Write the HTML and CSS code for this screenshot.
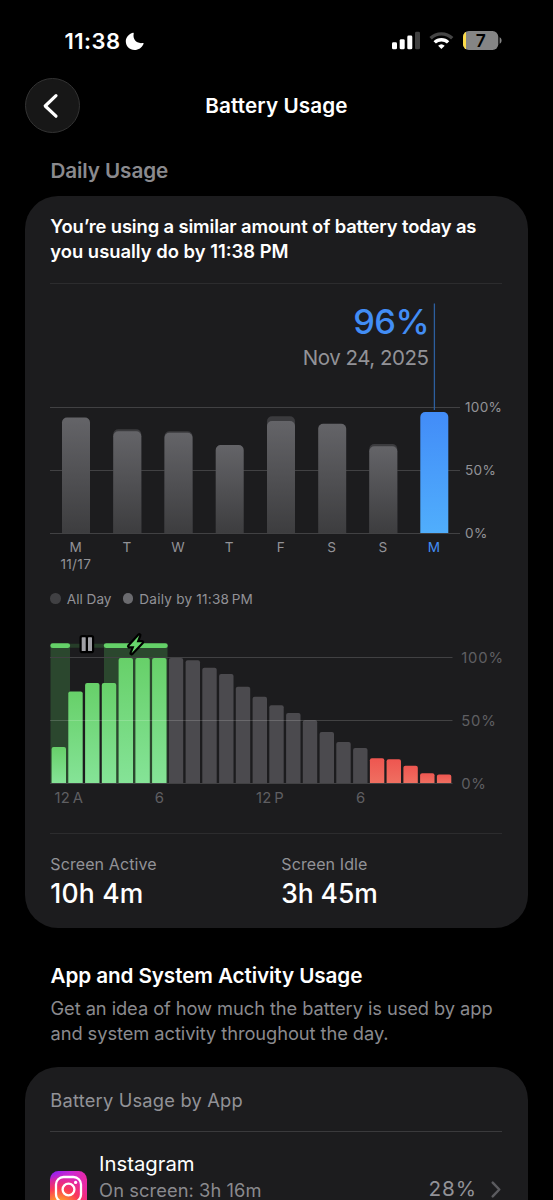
FILE: index.html
```html
<!DOCTYPE html>
<html lang="en">
<head>
<meta charset="utf-8">
<title>Battery Usage</title>
<link rel="stylesheet" href="styles.css">
</head>
<body>
<div class="screen">
  <header class="status">
    <div class="status-time">
      <span class="clock">11:38</span>
      <svg class="moon" width="20" height="20" viewBox="0 0 20 20"><path fill="#fff" d="M7.900.8c.5-.2 1 .2.8.8-1.200 5.700 2.900 10.500 9.100 9.400.6-.1 1 .4.700.9-1.600 3.800-5 6-8.900 6C4.500 17.900.8 14.200.8 9.200.8 5.400 3.800 2 7.900.8z"/></svg>
    </div>
    <svg class="status-icons" width="112" height="24" viewBox="391 29 112 24">
      <g fill="#fff">
        <rect x="392" y="42.300" width="5" height="7" rx="1.400"/>
        <rect x="399.700" y="39.200" width="5" height="10.100" rx="1.400"/>
        <rect x="407.300" y="35.600" width="5" height="13.700" rx="1.400"/>
        <rect x="415" y="31.800" width="5" height="17.500" rx="1.400" opacity=".25"/>
      </g>
      <g fill="none" stroke="#fff" stroke-width="3.400">
        <path opacity=".27" d="M430.600 38.300a15.500 15.500 0 0 1 21.600 0"/>
        <path d="M434.700 42.400a9.600 9.600 0 0 1 13.400 0"/>
      </g>
      <path fill="#fff" d="M441.400 49l-3.300-3.300a4.800 4.800 0 0 1 6.600 0z"/>
      <clipPath id="batt"><rect x="463" y="31" width="35.300" height="19" rx="5.800"/></clipPath>
      <g clip-path="url(#batt)">
        <rect x="463" y="31" width="36" height="19" fill="#858585"/>
        <rect x="463" y="31" width="3" height="19" fill="#fddc4a"/>
      </g>
      <path fill="#858585" d="M499.600 37.300c2.600.8 2.600 5.600 0 6.400z"/>
      <text class="battery-level" x="480.800" y="46.600">7</text>
    </svg>
  </header>

  <nav class="nav">
    <button class="back" aria-label="Back">
      <svg width="16" height="26" viewBox="0 0 16 26"><path fill="none" stroke="#fff" stroke-width="3.200" stroke-linecap="round" stroke-linejoin="round" d="M13 2.600 2.200 13 13 23.200"/></svg>
    </button>
    <h1 class="title">Battery Usage</h1>
  </nav>

  <h2 class="section-title">Daily Usage</h2>

  <section class="card daily">
    <p class="headline"><span class="headline-a">You’re using a similar amount of battery today as</span><br>you usually do by 11:38 PM</p>
    <hr class="rule">

    <svg class="week" width="460" height="292" viewBox="50 284 460 292">
      <defs>
        <linearGradient id="gray" x1="0" y1="0" x2="0" y2="1"><stop stop-color="#646468"/><stop offset="1" stop-color="#3d3d3f"/></linearGradient>
        <linearGradient id="blue" x1="0" y1="0" x2="0" y2="1"><stop stop-color="#428cf8"/><stop offset="1" stop-color="#50aefc"/></linearGradient>
      </defs>
      <text class="percent" x="429" y="334">96%</text>
      <text class="date" x="428.500" y="364.500">Nov 24, 2025</text>
      <path class="grid" d="M50 407.500H460M50 470.500H460M50 533.500H460"/>
      <path stroke="#2c5f9f" stroke-width="1.300" d="M434.400 303.500V410"/>
      <g fill="#3b3b3e">
        <path d="M113.300 533V434.300a5 5 0 0 1 5-5h18a5 5 0 0 1 5 5V533z"/>
        <path d="M164.500 533V436.300a5 5 0 0 1 5-5h18a5 5 0 0 1 5 5V533z"/>
        <path d="M267 533V421.300a5 5 0 0 1 5-5h18a5 5 0 0 1 5 5V533z"/>
        <path d="M369.300 533V449a5 5 0 0 1 5-5h18a5 5 0 0 1 5 5V533z"/>
      </g>
      <g fill="url(#gray)">
        <path d="M62 533V422.500a5 5 0 0 1 5-5h18a5 5 0 0 1 5 5V533z"/>
        <path d="M113.300 533V436.300a5 5 0 0 1 5-5h18a5 5 0 0 1 5 5V533z"/>
        <path d="M164.500 533V437.700a5 5 0 0 1 5-5h18a5 5 0 0 1 5 5V533z"/>
        <path d="M215.700 533V450a5 5 0 0 1 5-5h18a5 5 0 0 1 5 5V533z"/>
        <path d="M267 533V426a5 5 0 0 1 5-5h18a5 5 0 0 1 5 5V533z"/>
        <path d="M318.200 533V428.700a5 5 0 0 1 5-5h18a5 5 0 0 1 5 5V533z"/>
        <path d="M369.300 533V451.300a5 5 0 0 1 5-5h18a5 5 0 0 1 5 5V533z"/>
      </g>
      <path fill="url(#blue)" d="M420.300 533V417a5 5 0 0 1 5-5h18a5 5 0 0 1 5 5V533z"/>
      <g class="axis">
        <text x="465" y="412.300">100%</text>
        <text x="465" y="475.300">50%</text>
        <text x="465" y="538.300">0%</text>
      </g>
      <g class="axis day">
        <text x="75.800" y="552">M</text>
        <text x="75.800" y="569.300">11/17</text>
        <text x="127" y="552">T</text>
        <text x="178.200" y="552">W</text>
        <text x="229.300" y="552">T</text>
        <text x="280.800" y="552">F</text>
        <text x="331.800" y="552">S</text>
        <text x="383" y="552">S</text>
        <text class="today" x="434" y="552">M</text>
      </g>
    </svg>

    <div class="legend">
      <span class="dot dark"></span><span class="legend-all">All Day</span>
      <span class="dot light"></span><span class="legend-daily">Daily by 11:38<span class="thin"></span>PM</span>
    </div>

    <svg class="hours" width="460" height="186" viewBox="50 626 460 186">
      <defs>
        <linearGradient id="green" x1="0" y1="0" x2="0" y2="1"><stop stop-color="#67d069"/><stop offset="1" stop-color="#85e397"/></linearGradient>
        <linearGradient id="red" x1="0" y1="0" x2="0" y2="1"><stop stop-color="#ee5650"/><stop offset="1" stop-color="#ef6f61"/></linearGradient>
      </defs>
      <path fill="#2b472e" d="M50.500 646H70V783H50.500zM104 646h63.500V783H104z"/>
      <path fill="#263d29" d="M68 643.800h38v4H68z"/>
      <rect x="50.300" y="643.300" width="19.800" height="4.800" rx="2.400" fill="#64d168"/>
      <rect x="103.800" y="643.300" width="64" height="4.800" rx="2.400" fill="#64d168"/>
      <path class="grid" d="M50 657.500H452.500"/>
      <g fill="url(#green)">
        <path d="M51.600 783V749a2 2 0 0 1 2-2h10.400a2 2 0 0 1 2 2V783z"/>
        <path d="M68.300 783V693.500a2 2 0 0 1 2-2h10.400a2 2 0 0 1 2 2V783z"/>
        <path d="M85.100 783V685a2 2 0 0 1 2-2h10.400a2 2 0 0 1 2 2V783z"/>
        <path d="M101.800 783V685a2 2 0 0 1 2-2h10.400a2 2 0 0 1 2 2V783z"/>
        <path d="M118.600 783V660a2 2 0 0 1 2-2h10.400a2 2 0 0 1 2 2V783z"/>
        <path d="M135.400 783V660a2 2 0 0 1 2-2h10.400a2 2 0 0 1 2 2V783z"/>
        <path d="M152.100 783V660a2 2 0 0 1 2-2h10.400a2 2 0 0 1 2 2V783z"/>
      </g>
      <g fill="#4b4a4e">
        <path d="M168.800 783V660a2 2 0 0 1 2-2h10.400a2 2 0 0 1 2 2V783z"/>
        <path d="M185.600 783V662.300a2 2 0 0 1 2-2h10.400a2 2 0 0 1 2 2V783z"/>
        <path d="M202.300 783V669.700a2 2 0 0 1 2-2h10.400a2 2 0 0 1 2 2V783z"/>
        <path d="M219.100 783V676a2 2 0 0 1 2-2h10.400a2 2 0 0 1 2 2V783z"/>
        <path d="M235.800 783V688.700a2 2 0 0 1 2-2h10.400a2 2 0 0 1 2 2V783z"/>
        <path d="M252.600 783V698.700a2 2 0 0 1 2-2h10.400a2 2 0 0 1 2 2V783z"/>
        <path d="M269.300 783V707.300a2 2 0 0 1 2-2h10.400a2 2 0 0 1 2 2V783z"/>
        <path d="M286.100 783V715a2 2 0 0 1 2-2h10.400a2 2 0 0 1 2 2V783z"/>
        <path d="M302.800 783V722.300a2 2 0 0 1 2-2h10.400a2 2 0 0 1 2 2V783z"/>
        <path d="M319.600 783V734a2 2 0 0 1 2-2h10.400a2 2 0 0 1 2 2V783z"/>
        <path d="M336.300 783V744a2 2 0 0 1 2-2h10.400a2 2 0 0 1 2 2V783z"/>
        <path d="M353.100 783V750a2 2 0 0 1 2-2h10.400a2 2 0 0 1 2 2V783z"/>
      </g>
      <g fill="url(#red)">
        <path d="M369.900 783V760.300a2 2 0 0 1 2-2h10.400a2 2 0 0 1 2 2V783z"/>
        <path d="M386.600 783V761.300a2 2 0 0 1 2-2h10.400a2 2 0 0 1 2 2V783z"/>
        <path d="M403.400 783V767.700a2 2 0 0 1 2-2h10.400a2 2 0 0 1 2 2V783z"/>
        <path d="M420.100 783V775.300a2 2 0 0 1 2-2h10.400a2 2 0 0 1 2 2V783z"/>
        <path d="M436.900 783V776.500a2 2 0 0 1 2-2h10.400a2 2 0 0 1 2 2V783z"/>
      </g>
      <path stroke="#fff" stroke-opacity=".17" d="M50 720.500H452.500"/>
      <path class="grid" d="M50 783.500H452.500"/>
      <g fill="none" stroke="#000" stroke-width="4.400" stroke-linejoin="round">
        <rect x="81.700" y="637.200" width="4" height="13.800" rx=".6"/>
        <rect x="88" y="637.200" width="4" height="13.800" rx=".6"/>
      </g>
      <g fill="#a0a0a5">
        <rect x="81.700" y="637.200" width="4" height="13.800" rx=".6"/>
        <rect x="88" y="637.200" width="4" height="13.800" rx=".6"/>
      </g>
      <path fill="#66d66b" stroke="#000" stroke-width="4.400" paint-order="stroke" stroke-linejoin="round" d="M139.300 635.200 129.200 646.300h5.200L131.600 653.300 142 642.200h-5.400z"/>
      <g class="axis hour">
        <text x="461.200" y="663.300">100%</text>
        <text x="461.200" y="726">50%</text>
        <text x="461.200" y="789">0%</text>
      </g>
      <g class="axis hour tick">
        <text x="54.500" y="803.300">12<tspan dx="2.600">A</tspan></text>
        <text x="154.800" y="803.300">6</text>
        <text x="256" y="803.300">12<tspan dx="2.600">P</tspan></text>
        <text x="356" y="803.300">6</text>
      </g>
    </svg>
    <hr class="rule">

    <div class="stats">
      <div class="stat"><div class="stat-label">Screen Active</div><div class="stat-value">10h 4m</div></div>
      <div class="stat"><div class="stat-label">Screen Idle</div><div class="stat-value tight">3h 45m</div></div>
    </div>
  </section>

  <section class="intro">
    <h2 class="intro-title">App and System Activity Usage</h2>
    <p class="intro-text">Get an idea of how much the battery is used by app<br>and system activity throughout the day.</p>
  </section>

  <section class="card apps">
    <h3 class="apps-title">Battery Usage by App</h3>
    <hr class="rule strong">
    <div class="app">
      <svg class="app-icon" width="37" height="37" viewBox="0 0 37 37">
        <defs>
          <linearGradient id="ig1" x1="0" y1="0" x2="1" y2=".35"><stop stop-color="#7a1cfb"/><stop offset=".5" stop-color="#c828d8"/><stop offset="1" stop-color="#f02a9c"/></linearGradient>
          <radialGradient id="ig2" cx=".25" cy="1.050" r="1.050"><stop stop-color="#ffd23e"/><stop offset=".25" stop-color="#ff9a2c"/><stop offset=".55" stop-color="#fb3a55"/><stop offset=".78" stop-color="#f02a80" stop-opacity=".7"/><stop offset="1" stop-color="#d02ad0" stop-opacity="0"/></radialGradient>
        </defs>
        <rect width="37" height="37" rx="8.500" fill="url(#ig1)"/>
        <rect width="37" height="37" rx="8.500" fill="url(#ig2)"/>
        <g fill="none" stroke="#fff" stroke-width="2.300">
          <rect x="6" y="6" width="25" height="25" rx="7.500"/>
          <circle cx="18.500" cy="18.500" r="5.900"/>
        </g>
        <circle cx="25.600" cy="11.400" r="1.600" fill="#fff"/>
      </svg>
      <div class="app-text"><div class="app-name">Instagram</div><div class="app-sub">On screen: 3h 16m</div></div>
      <span class="app-percent">28%</span>
      <svg class="app-chevron" width="10" height="17" viewBox="0 0 10 17"><path fill="none" stroke="#5b5b5f" stroke-width="2.500" stroke-linecap="round" stroke-linejoin="round" d="M1.700 1.700 8.300 8.500 1.700 15.300"/></svg>
    </div>
  </section>
</div>
</body>
</html>
```
FILE: styles.css
```css
* { box-sizing: border-box; margin: 0; padding: 0; }
html, body { background: #000; overflow: hidden; }
body { font-family: Inter, "Liberation Sans", sans-serif; color: #fff; font-weight: 400; }
svg { display: block; flex: none; overflow: visible; }
.screen { width: 553px; height: 1200px; overflow: hidden; display: flex; flex-direction: column; }
.screen > * { flex: none; }

.status { height: 78px; padding: 29px 50px 0 64.5px; display: flex; justify-content: space-between; align-items: flex-start; }
.status-time { display: flex; align-items: center; height: 24px; gap: 4.2px; }
.clock { font-size: 22px; font-weight: 600; letter-spacing: .5px; line-height: 24px; }
.moon { margin-top: 1px; }
.battery-level { font-size: 17.5px; font-weight: 600; text-anchor: middle; fill: #000; }

.nav { height: 55px; padding: 0 25.3px; display: grid; grid-template-columns: 55px 1fr 55px; align-items: center; }
.back { width: 55px; height: 55px; border-radius: 50%; border: 1px solid #333; background: #171717; display: flex; align-items: center; justify-content: center; padding-right: 3px; }
.title { font-size: 20.7px; font-weight: 600; letter-spacing: .1px; text-align: center; line-height: 26px; }

.section-title { margin: 25px 0 0 50.4px; font-size: 20.7px; line-height: 26px; font-weight: 600; letter-spacing: -.1px; color: #8a8a8e; }

.card { margin: 0 25.3px; padding: 0 25px; background: #1c1c1e; border-radius: 33px; }
.daily { height: 731.5px; margin-top: 12.3px; padding-top: 17.4px; }
.headline { font-size: 18.4px; line-height: 25.3px; font-weight: 600; white-space: nowrap; }
.headline-a { letter-spacing: -.13px; }
.rule { border: 0; height: 1px; background: #2c2c2e; margin-top: 18.4px; width: 452px; }
.week .percent { font-size: 34.4px; font-weight: 500; letter-spacing: -.6px; text-anchor: end; fill: #428df5; }
.week .date { font-size: 20.5px; letter-spacing: -.48px; text-anchor: end; fill: #929297; }
.grid { stroke: #414143; stroke-width: 1; fill: none; }
.axis { font-size: 13.6px; letter-spacing: .3px; fill: #929297; }
.day { text-anchor: middle; }
.today { fill: #428df5; }
.hour { font-size: 14.8px; letter-spacing: .85px; fill: #5f5f62; }
.tick { letter-spacing: .3px; }

.legend { height: 20px; margin-top: 13px; display: flex; align-items: center; font-size: 13.6px; line-height: 20px; color: #929297; white-space: nowrap; }
.dot { width: 10.5px; height: 10.5px; border-radius: 50%; }
.dark { background: #404043; }
.light { background: #6b6b6f; }
.legend-all { margin: 0 11.3px 0 6px; }
.legend-daily { margin-left: 6px; letter-spacing: .22px; }
.thin { display: inline-block; width: 2.5px; }
.hours { margin-top: 17px; }
.hours + .rule { margin-top: 21px; }

.stats { display: grid; grid-template-columns: 231px 1fr; padding-top: 20px; }
.stat-label { font-size: 16px; line-height: 20px; letter-spacing: .1px; color: #929297; }
.stat-value { font-size: 26.5px; line-height: 32px; font-weight: 500; letter-spacing: .2px; margin-top: 3px; }
.tight { letter-spacing: -.1px; }

.intro { padding: 35px 50px 0 50.5px; white-space: nowrap; }
.intro-title { font-size: 20.7px; line-height: 26px; font-weight: 600; letter-spacing: -.1px; }
.intro-text { font-size: 18.3px; line-height: 25.3px; letter-spacing: -.07px; color: #8a8a8e; margin-top: 7px; }

.apps { margin-top: 20.5px; height: 300px; padding-top: 20px; }
.apps-title { font-size: 18.3px; line-height: 26px; font-weight: 400; letter-spacing: .2px; color: #929297; }
.rule.strong { background: #3a3a3c; margin-top: 18px; }
.app { display: flex; align-items: flex-start; padding-top: 19.5px; }
.app-icon { margin-top: 19.5px; }
.app-text { margin-left: 11.8px; flex: 1; }
.app-name { font-size: 20.3px; line-height: 26px; }
.app-sub { font-size: 18.3px; line-height: 26px; letter-spacing: .08px; color: #8a8a8e; }
.app-percent { font-size: 20.7px; line-height: 26px; letter-spacing: .9px; color: #929297; margin: 25px 13.7px 0 0; }
.app-chevron { margin: 29.5px 2px 0 0; }
```
